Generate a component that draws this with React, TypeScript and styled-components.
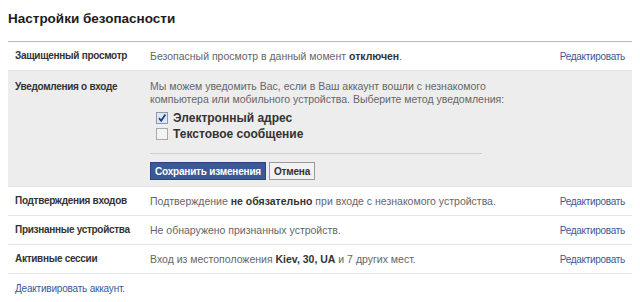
import React from 'react';
import styled, {createGlobalStyle} from 'styled-components';

const GlobalStyle = createGlobalStyle`
  body {
    margin: 8px;
    background: #fff;
    font-family: 'Liberation Sans', Arial, sans-serif;
    font-size: 11px;
    color: #333;
  }
`;

type Row = {
  label: string;
  text: React.ReactNode;
};

const rows: Row[] = [
  {
    label: 'Подтверждения входов',
    text: (
      <>
        Подтверждение <b>не обязательно</b> при входе с незнакомого устройства.
      </>
    ),
  },
  {label: 'Признанные устройства', text: 'Не обнаружено признанных устройств.'},
  {
    label: 'Активные сессии',
    text: (
      <>
        Вход из местоположения <b>Kiev, 30, UA</b> и 7 других мест.
      </>
    ),
  },
];

const Check: React.FC<{checked?: boolean; label: string}> = ({checked, label}) => (
  <CheckRow>
    <CheckBox $checked={checked}>
      {checked && (
        <svg width="10" height="10" viewBox="0 0 10 10">
          <path d="M2 5.2 L4.2 7.8 L8.4 1.6" fill="none" stroke="#1f3f8f" strokeWidth="1.8" />
        </svg>
      )}
    </CheckBox>
    <CheckLabel>{label}</CheckLabel>
  </CheckRow>
);

const App: React.FC = () => {
  return (
    <Page>
      <GlobalStyle />
      <Title>Настройки безопасности</Title>
      <Table>
        <SettingRow>
          <Label>Защищенный просмотр</Label>
          <Text>
            Безопасный просмотр в данный момент <b>отключен</b>.
          </Text>
          <EditLink href="#">Редактировать</EditLink>
        </SettingRow>
        <OpenRow>
          <Label>Уведомления о входе</Label>
          <Editor>
            <Text>
              Мы можем уведомить Вас, если в Ваш аккаунт вошли с незнакомого
              <br />
              компьютера или мобильного устройства. Выберите метод уведомления:
            </Text>
            <Checks>
              <Check checked label="Электронный адрес" />
              <Check label="Текстовое сообщение" />
            </Checks>
            <Divider />
            <Buttons>
              <Button $primary>Сохранить изменения</Button>
              <Button>Отмена</Button>
            </Buttons>
          </Editor>
        </OpenRow>
        {rows.map((row) => (
          <SettingRow key={row.label}>
            <Label>{row.label}</Label>
            <Text>{row.text}</Text>
            <EditLink href="#">Редактировать</EditLink>
          </SettingRow>
        ))}
      </Table>
      <Deactivate href="#">Деактивировать аккаунт.</Deactivate>
    </Page>
  );
};

const Page = styled.div`
  width: 625px;
`;
const Title = styled.h2`
  margin: 0;
  height: 33px;
  font-size: 13.5px;
  font-weight: bold;
  color: #1c1c1c;
  line-height: 22px;
`;
const Table = styled.div`
  border-top: 1px solid #b9b9b9;
`;
const SettingRow = styled.div`
  display: flex;
  align-items: center;
  height: 28px;
  padding: 0 8px 0 7px;
  border-bottom: 1px solid #e5e5e5;
`;
const OpenRow = styled.div`
  display: flex;
  align-items: flex-start;
  padding: 9px 8px 6px 7px;
  background: #ededed;
  border-bottom: 1px solid #e5e5e5;
`;
const Label = styled.div`
  width: 135px;
  flex-shrink: 0;
  white-space: nowrap;
  font-size: 10px;
  letter-spacing: -0.3px;
  font-weight: bold;
  color: #333;
  line-height: 14px;
`;
const Text = styled.div`
  flex: 1;
  font-size: 10.5px;
  color: #666;
  line-height: 13px;
  b {
    color: #333;
  }
`;
const EditLink = styled.a`
  font-size: 10px;
  letter-spacing: -0.3px;
  color: #3b5998;
  text-decoration: none;
`;
const Editor = styled.div`
  flex: 1;
  display: flex;
  flex-direction: column;
`;
const Checks = styled.div`
  display: flex;
  flex-direction: column;
  gap: 2px;
  margin: 5px 0 0 6px;
`;
const CheckRow = styled.label`
  display: flex;
  align-items: center;
  gap: 5px;
  height: 14px;
`;
const CheckBox = styled.span<{$checked?: boolean}>`
  width: 10px;
  height: 10px;
  display: flex;
  align-items: center;
  justify-content: center;
  border: 1px solid ${({$checked}) => ($checked ? '#8f98b0' : '#a8a8a8')};
  background: ${({$checked}) => ($checked ? '#dfe6f4' : '#f3f3f3')};
`;
const CheckLabel = styled.span`
  font-size: 12px;
  font-weight: bold;
  color: #333;
`;
const Divider = styled.div`
  width: 332px;
  height: 1px;
  background: #cfcfcf;
  margin: 12px 0 8px;
`;
const Buttons = styled.div`
  display: flex;
  gap: 3px;
`;
const Button = styled.button<{$primary?: boolean}>`
  height: 18px;
  padding: 0 4px;
  font-family: inherit;
  font-size: 10px;
  letter-spacing: -0.2px;
  font-weight: bold;
  border: 1px solid ${({$primary}) => ($primary ? '#29447e' : '#999')};
  background: ${({$primary}) => ($primary ? '#3b5998' : '#f2f2f2')};
  color: ${({$primary}) => ($primary ? '#fff' : '#333')};
`;
const Deactivate = styled.a`
  display: block;
  margin: 9px 0 0 7px;
  font-size: 10px;
  letter-spacing: -0.2px;
  color: #3b5998;
  text-decoration: none;
`;

export default App;
